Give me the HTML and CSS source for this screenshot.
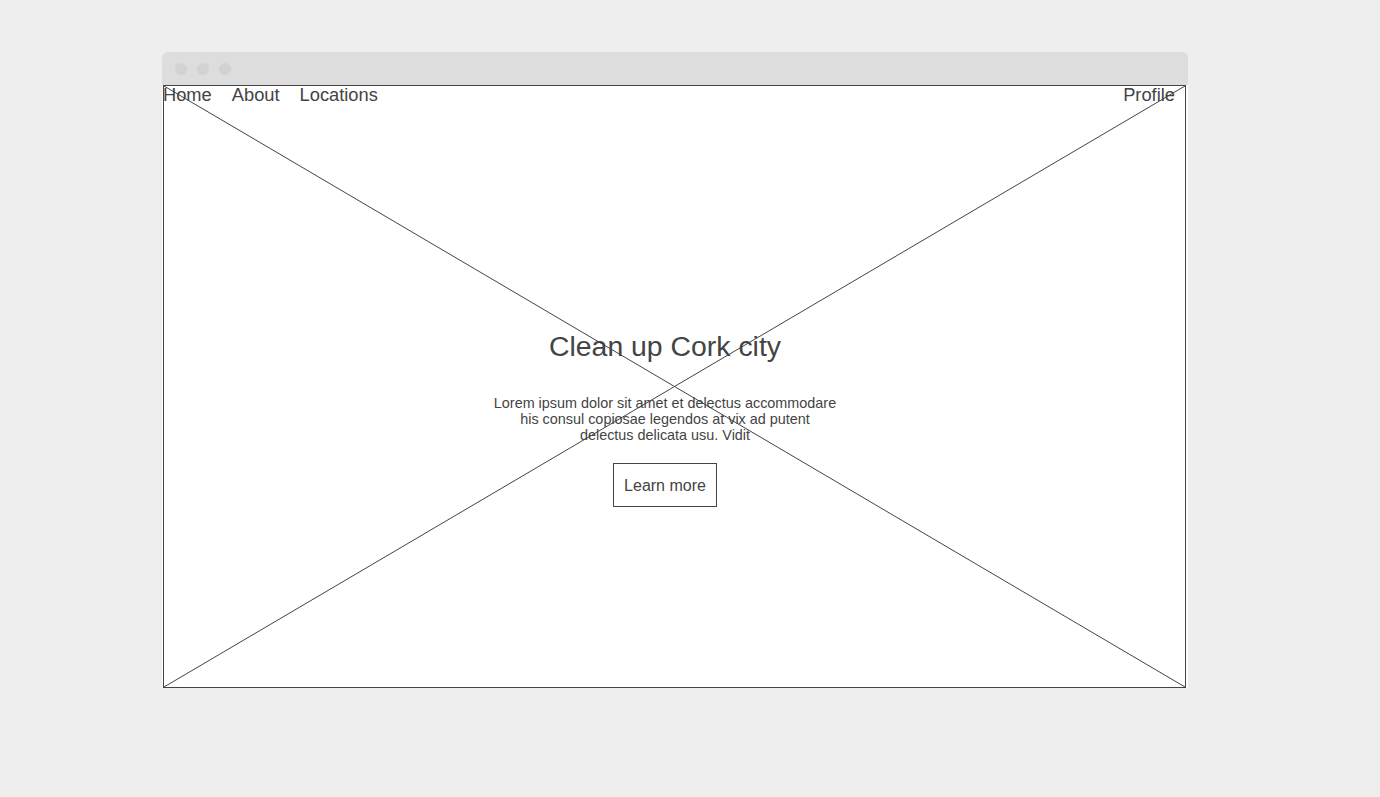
FILE: index.html
```html
<!DOCTYPE html>
<html>
<head>
<meta charset="utf-8">
<title>Clean up Cork city</title>
<link rel="stylesheet" href="styles.css">
</head>
<body>
<div class="window">
  <div class="titlebar">
    <span class="dot"></span><span class="dot"></span><span class="dot"></span>
  </div>
  <div class="body">
    <div class="hero">
      <svg class="cross" viewBox="0 0 100 100" preserveAspectRatio="none">
        <line x1="0" y1="0" x2="100" y2="100" vector-effect="non-scaling-stroke"/>
        <line x1="100" y1="0" x2="0" y2="100" vector-effect="non-scaling-stroke"/>
      </svg>
      <nav class="nav">
        <div class="nav-left">
          <a>Home</a><a>About</a><a>Locations</a>
        </div>
        <a>Profile</a>
      </nav>
      <div class="center">
        <h1 class="title">Clean up Cork city</h1>
        <p class="text">Lorem ipsum dolor sit amet et delectus accommodare<br>his consul copiosae legendos at vix ad putent<br>delectus delicata usu. Vidit</p>
        <div class="btn">Learn more</div>
      </div>
    </div>
  </div>
</div>
</body>
</html>
```
FILE: styles.css
```css
html, body {
  margin: 0;
  padding: 0;
}
body {
  background: #eeeeee;
  font-family: "Liberation Sans", Arial, sans-serif;
  color: #444444;
  padding: 52px 0 0 162px;
  height: 797px;
  box-sizing: border-box;
}
.window {
  width: 1026px;
}
.titlebar {
  height: 33px;
  background: #dddddd;
  border-radius: 6px 6px 0 0;
  display: flex;
  align-items: center;
  gap: 10px;
  padding-left: 13px;
  box-sizing: border-box;
}
.dot {
  width: 12px;
  height: 12px;
  border-radius: 50%;
  background: #d2d2d2;
}
.body {
  background: #ffffff;
  padding-left: 1px;
}
.hero {
  position: relative;
  width: 1023px;
  height: 603px;
  border: 1px solid #444444;
  box-sizing: border-box;
  display: flex;
  flex-direction: column;
}
.cross {
  position: absolute;
  inset: 0;
  width: 100%;
  height: 100%;
}
.cross line {
  stroke: #444444;
  stroke-width: 1;
}
.nav {
  position: relative;
  display: flex;
  justify-content: space-between;
  font-size: 18.3px;
  line-height: 18px;
  height: 18px;
  padding-right: 10px;
  margin-left: -1px;
}
.nav-left {
  display: flex;
  gap: 20px;
}
.nav a {
  color: #444444;
}
.center {
  position: relative;
  display: flex;
  flex-direction: column;
  align-items: center;
  margin-right: 19px;
}
.title {
  margin: 226px 0 0;
  font-size: 28.4px;
  font-weight: normal;
  line-height: 32px;
}
.text {
  margin: 33px 0 0;
  font-size: 14.4px;
  line-height: 16px;
  text-align: center;
}
.btn {
  margin-top: 20px;
  border: 1px solid #444444;
  height: 44px;
  box-sizing: border-box;
  padding: 1px 10px 0;
  font-size: 16px;
  line-height: 42px;
  background: transparent;
}
```
